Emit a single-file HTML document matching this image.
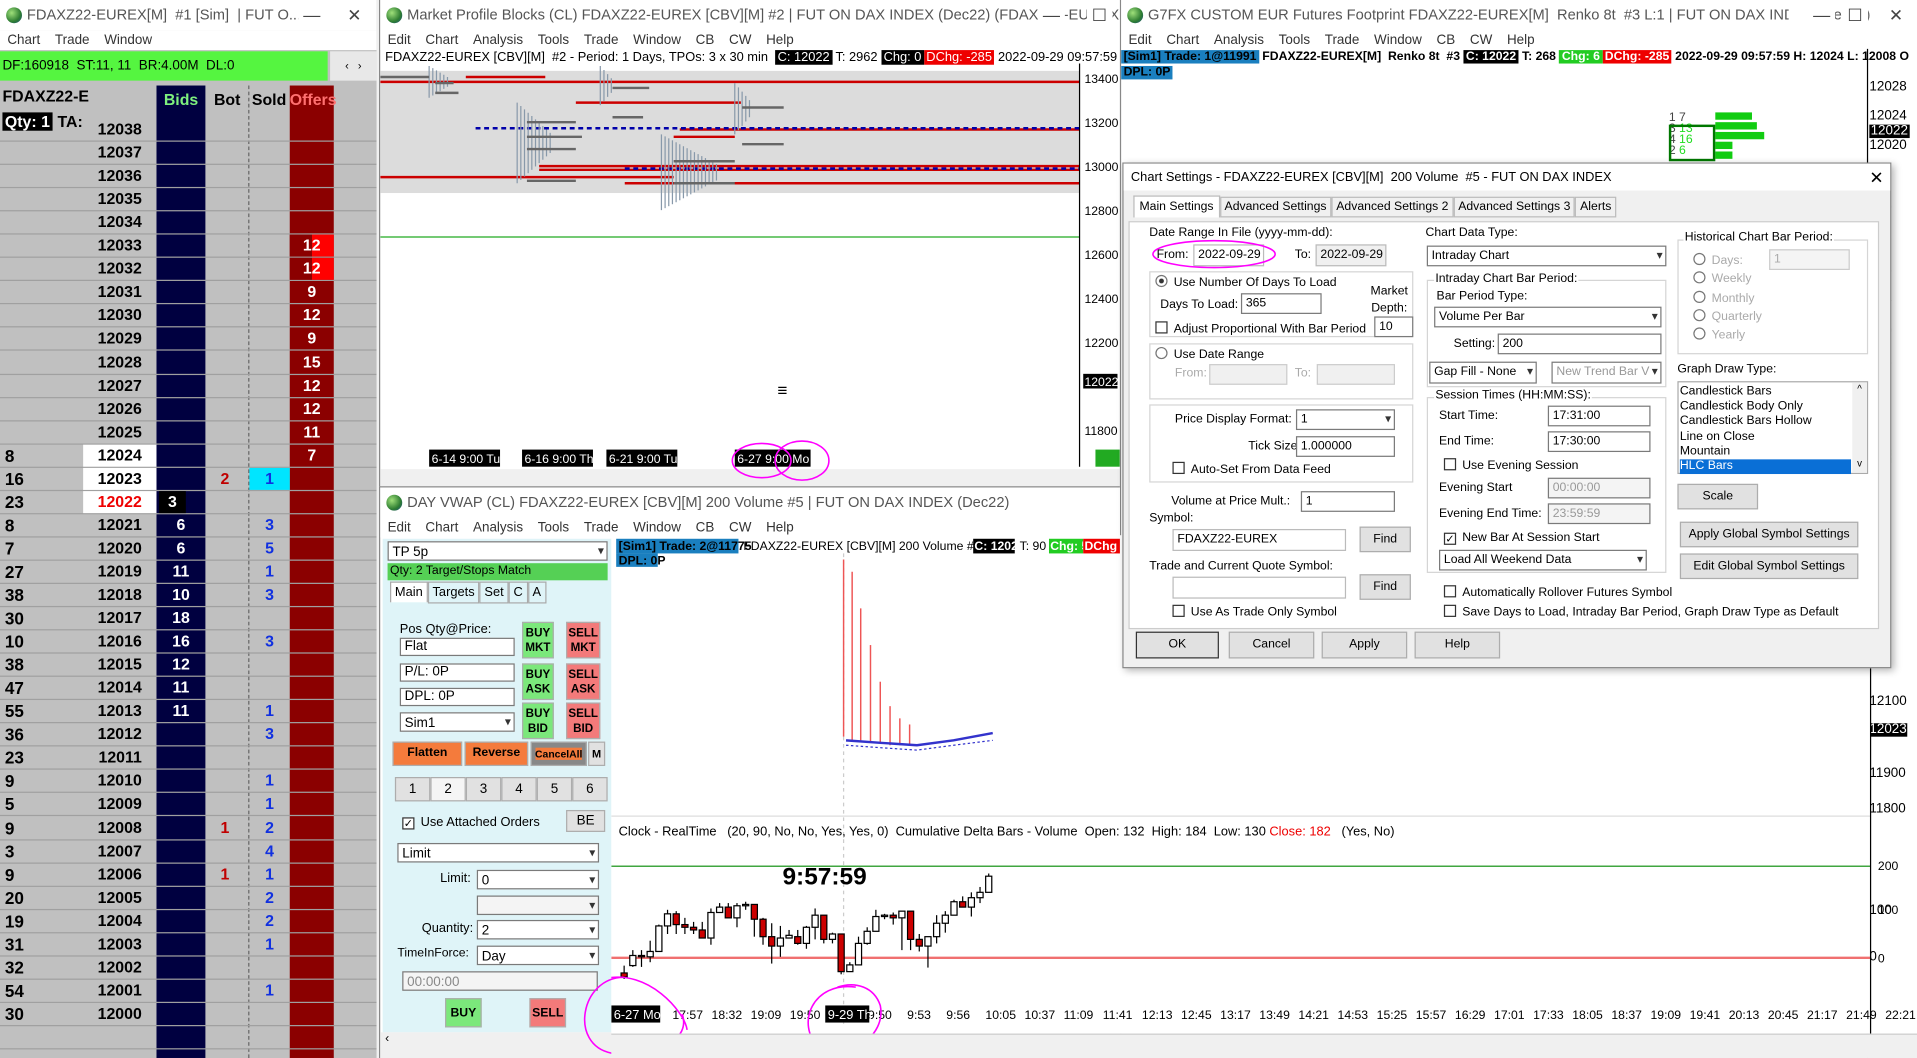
<!DOCTYPE html>
<html><head><meta charset="utf-8">
<style>
*{box-sizing:border-box;margin:0;padding:0}
html,body{width:1917px;height:1058px;overflow:hidden;background:#fff}
#root{position:absolute;left:0;top:0;width:1568px;height:866px;transform:scale(1.2226,1.2217);transform-origin:0 0;font-family:"Liberation Sans",sans-serif;font-size:11px;color:#000;background:#f0f0f0}
.a{position:absolute}
.title{position:absolute;height:25px;background:#fff;font-size:12px;color:#555;line-height:25px;padding-left:22px;white-space:nowrap;overflow:hidden}
.globe{position:absolute;left:5px;top:6px;width:13px;height:13px;border-radius:50%;background:radial-gradient(circle at 35% 35%,#9fe07a,#2e7d32 60%,#1b4b8a)}
.wb{position:absolute;top:0;font-size:14px;color:#444;background:#fff;padding:0 4px}
.menu{position:absolute;height:16px;background:#fff;font-size:11px;color:#333;line-height:16px;white-space:nowrap}
.menu span{margin:0 6px}
.dom{font-weight:bold;font-size:13px}
.btn{position:absolute;background:#e1e1e1;border:1px solid #adadad;text-align:center;font-size:11px}
.inp{position:absolute;background:#fff;border:1px solid #7a7a7a;font-size:11px;padding-left:3px;line-height:16px;white-space:nowrap;overflow:hidden}
.dd::after{content:"▾";position:absolute;right:2px;top:0;font-size:10px;color:#333}
.grp{position:absolute;border:1px solid #d5d5d5}
.lbl{position:absolute;white-space:nowrap;font-size:11px}
#dlg .lbl,#dlg .inp,#dlg .btn{font-size:10px}
#dlg .inp{line-height:15px}
.chk{display:inline-block;width:10px;height:10px;border:1px solid #333;background:#fff;vertical-align:-1px;margin-right:5px;font-size:9px;line-height:8px;text-align:center}
.rad{display:inline-block;width:10px;height:10px;border:1px solid #777;border-radius:50%;background:#fff;vertical-align:-1px;margin-right:5px}
.tag{padding:0 2px}
</style></head><body><div id="root">

<!-- ===== LEFT DOM WINDOW ===== -->
<div class="a" style="left:0;top:0;width:308px;height:866px;background:#c0c0c0;overflow:hidden">
 <div class="title" style="left:0;top:0;width:308px"><div class="globe"></div>FDAXZ22-EUREX[M] &nbsp;#1 [Sim] &nbsp;| FUT O...<span class="wb" style="left:244px">—</span><span class="wb" style="left:280px">✕</span></div>
 <div class="menu" style="left:0;top:25px;width:308px"><span>Chart</span><span>Trade</span><span>Window</span></div>
 <div class="a" style="left:0;top:42px;width:268px;height:24px;background:#55f540;font-size:11px;line-height:24px;padding-left:2px">DF:160918 &nbsp;ST:11, 11 &nbsp;BR:4.00M &nbsp;DL:0</div>
 <div class="a" style="left:270px;top:42px;width:38px;height:24px;background:#e8e8e8;font-size:9px;line-height:24px;text-align:center">‹ &nbsp; ›</div>
 <div id="dom"></div>
</div>

<!-- ===== MIDDLE TOP WINDOW ===== -->
<div class="a" style="left:310px;top:0;width:606px;height:398px;background:#fff;border-left:1px solid #888;overflow:hidden">
 <div class="title" style="left:0;top:0;width:606px"><div class="globe"></div>Market Profile Blocks (CL) FDAXZ22-EUREX [CBV][M] #2 | FUT ON DAX INDEX (Dec22) (FDAXZ22-EUREX [C...<span class="wb" style="left:538px">—</span><span class="wb" style="left:578px">☐</span></div>
 <div class="menu" style="left:0;top:25px;width:606px"><span>Edit</span><span>Chart</span><span>Analysis</span><span>Tools</span><span>Trade</span><span>Window</span><span>CB</span><span>CW</span><span>Help</span></div>
 <div class="a" style="left:4px;top:41px;font-size:10.5px;white-space:nowrap">FDAXZ22-EUREX [CBV][M] &nbsp;#2 - Period: 1 Days, TPOs: 3 x 30 min &nbsp;<span style="background:#000;color:#fff" class="tag">C: 12022</span> T: 2962 <span style="background:#000;color:#fff" class="tag">Chg: 0</span><span style="background:#e00;color:#fff" class="tag">DChg: -285</span> 2022-09-29 09:57:59 H: 12024 L:</div>
 <svg class="a" style="left:0;top:52px" width="606" height="346">
  <rect x="0" y="6" width="572" height="100" fill="#dcdcdc"/>
  <g stroke="#c00" stroke-width="2">
   <line x1="0" y1="15" x2="572" y2="15"/><line x1="70" y1="11" x2="135" y2="11"/>
   <line x1="160" y1="32" x2="295" y2="32"/><line x1="245" y1="54" x2="572" y2="54"/>
   <line x1="130" y1="84" x2="572" y2="84"/><line x1="130" y1="87" x2="572" y2="87"/>
   <line x1="0" y1="93" x2="240" y2="93"/><line x1="200" y1="98" x2="572" y2="98"/>
   <line x1="240" y1="60" x2="290" y2="60"/>
  </g>
  <g stroke="#00a" stroke-width="2" stroke-dasharray="4,3"><line x1="78" y1="53" x2="572" y2="53"/><line x1="200" y1="86" x2="572" y2="86"/></g>
  <g stroke="#8899aa" stroke-width="1" id="mp"></g>
  <g stroke="#666" stroke-width="2">
   <line x1="0" y1="11" x2="40" y2="11"/><line x1="45" y1="16" x2="60" y2="16"/><line x1="45" y1="24" x2="64" y2="24"/>
   <line x1="120" y1="48" x2="160" y2="48"/><line x1="120" y1="60" x2="165" y2="60"/><line x1="120" y1="70" x2="160" y2="70"/><line x1="120" y1="96" x2="160" y2="96"/>
   <line x1="190" y1="20" x2="220" y2="20"/><line x1="190" y1="44" x2="215" y2="44"/>
   <line x1="240" y1="80" x2="290" y2="80"/><line x1="240" y1="98" x2="290" y2="98"/>
   <line x1="296" y1="36" x2="330" y2="36"/><line x1="296" y1="66" x2="330" y2="66"/>
  </g>
  <line x1="0" y1="142" x2="572" y2="142" stroke="#2a2" stroke-width="1"/>
  <g font-size="10" fill="#000"><text x="576" y="16">13400</text><text x="576" y="52">13200</text><text x="576" y="88">13000</text><text x="576" y="124">12800</text><text x="576" y="160">12600</text><text x="576" y="196">12400</text><text x="576" y="232">12200</text><text x="576" y="304">11800</text></g>
  <rect x="575" y="254" width="28" height="12" fill="#000"/><text x="576" y="264" font-size="10" fill="#fff">12022</text>
  <text x="325" y="272" font-size="14">≡</text>
  <line x1="572" y1="0" x2="572" y2="330" stroke="#000"/>
  <g font-size="10"><rect x="40" y="316" width="58" height="14" fill="#000"/><text x="42" y="327" fill="#fff">6-14 9:00 Tu</text>
  <rect x="116" y="316" width="58" height="14" fill="#000"/><text x="118" y="327" fill="#fff">6-16 9:00 Th</text>
  <rect x="185" y="316" width="58" height="14" fill="#000"/><text x="187" y="327" fill="#fff">6-21 9:00 Tu</text>
  <rect x="290" y="316" width="62" height="14" fill="#000"/><text x="292" y="327" fill="#fff">6-27 9:00 Mo</text>
  <rect x="585" y="316" width="20" height="14" fill="#2a2"/></g>
  <rect x="0" y="332" width="606" height="14" fill="#f0f0f0"/>
  <g fill="none" stroke="#f0f" stroke-width="1.3"><ellipse cx="312" cy="325" rx="24" ry="14"/><ellipse cx="345" cy="325" rx="22" ry="16"/></g>
 </svg>
</div>

<!-- ===== RIGHT WINDOW ===== -->
<div class="a" style="left:916px;top:0;width:652px;height:866px;background:#fff;border-left:1px solid #888;overflow:hidden">
 <div class="title" style="left:0;top:0;width:652px"><div class="globe"></div>G7FX CUSTOM EUR Futures Footprint FDAXZ22-EUREX[M] &nbsp;Renko 8t &nbsp;#3 L:1 | FUT ON DAX INDEX (Dec22)<span class="wb" style="left:546px;padding-left:20px">—</span><span class="wb" style="left:590px">☐</span><span class="wb" style="left:624px">✕</span></div>
 <div class="menu" style="left:0;top:25px;width:652px"><span>Edit</span><span>Chart</span><span>Analysis</span><span>Tools</span><span>Trade</span><span>Window</span><span>CB</span><span>CW</span><span>Help</span></div>
 <div class="a" style="left:0;top:41px;font-size:10px;white-space:nowrap;font-weight:bold"><span style="background:#1a7fbf" class="tag">[Sim1] Trade: 1@11991</span> FDAXZ22-EUREX[M] &nbsp;Renko 8t &nbsp;#3 <span style="background:#000;color:#fff" class="tag">C: 12022</span> T: 268 <span style="background:#2c2;color:#fff" class="tag">Chg: 6</span><span style="background:#e00;color:#fff" class="tag">DChg: -285</span> 2022-09-29 09:57:59 H: 12024 L: 12008 O</div>
 <div class="a" style="left:0;top:54px;background:#1a7fbf;font-size:10px;font-weight:bold;padding:0 2px">DPL: 0P</div>
 <div class="a" style="left:610px;top:40px;width:1px;height:826px;background:#000"></div>
 <div class="a" style="left:612px;top:0;font-size:11px;line-height:1">
  <div class="a" style="top:66px">12028</div><div class="a" style="top:90px">12024</div><div class="a" style="top:102px;background:#000;color:#fff;padding:0 1px">12022</div><div class="a" style="top:114px">12020</div>
  <div class="a" style="top:164px">016</div><div class="a" style="top:188px">012</div><div class="a" style="top:216px">008</div><div class="a" style="top:240px">004</div><div class="a" style="top:266px">000</div><div class="a" style="top:292px">996</div>
  <div class="a" style="top:368px;background:#2a2;color:#fff;font-weight:bold">108</div>
  <div class="a" style="top:569px">12100</div><div class="a" style="top:592px;background:#000;color:#fff">12023</div><div class="a" style="top:628px">11900</div><div class="a" style="top:657px">11800</div>
  <div class="a" style="top:740px">100</div><div class="a" style="top:778px">0</div>
 </div>
 <div class="a" style="left:448px;top:92px;width:80px;height:40px;font-size:10px;color:#444;line-height:9px">
  <div class="a" style="left:38px;top:0;width:30px;height:6px;background:#1c1"></div>
  <div class="a" style="left:38px;top:8px;width:34px;height:6px;background:#1c1"></div>
  <div class="a" style="left:38px;top:16px;width:40px;height:6px;background:#1c1"></div>
  <div class="a" style="left:38px;top:24px;width:14px;height:6px;background:#1c1"></div>
  <div class="a" style="left:38px;top:32px;width:14px;height:6px;background:#1c1"></div>
  <div class="a" style="left:0;top:10px;width:38px;height:30px;border:2px solid #070"></div>1 7<br>3 <span style="color:#2d2">13</span><br>4 <span style="color:#2d2">16</span><br>2 <span style="color:#2d2">6</span></div>
</div>

<!-- ===== MIDDLE BOTTOM WINDOW ===== -->
<div class="a" style="left:310px;top:398px;width:606px;height:468px;background:#fff;border-left:1px solid #888;border-top:1px solid #888;overflow:hidden">
 <div class="title" style="left:0;top:0;width:606px"><div class="globe"></div>DAY VWAP (CL) FDAXZ22-EUREX [CBV][M] 200 Volume #5 | FUT ON DAX INDEX (Dec22)</div>
 <div class="menu" style="left:0;top:25px;width:606px"><span>Edit</span><span>Chart</span><span>Analysis</span><span>Tools</span><span>Trade</span><span>Window</span><span>CB</span><span>CW</span><span>Help</span></div>
 <div class="a" style="left:2px;top:42px;width:187px;height:404px;background:#dff4f8">
  <div class="inp dd" style="left:4px;top:2px;width:180px;height:16px">TP 5p</div>
  <div class="a" style="left:4px;top:20px;width:180px;height:14px;background:#55d055;font-size:10px;line-height:14px;padding-left:2px">Qty: 2 Target/Stops Match</div>
  <div class="a" style="left:6px;top:38px;font-size:10.5px;white-space:nowrap"><span style="border:1px solid #aaa;border-bottom:none;padding:2px 3px;background:#fff">Main</span><span style="border:1px solid #aaa;padding:2px 3px">Targets</span><span style="border:1px solid #aaa;padding:2px 3px">Set</span><span style="border:1px solid #aaa;padding:2px 3px">C</span><span style="border:1px solid #aaa;padding:2px 3px">A</span></div>
  <div class="lbl" style="left:14px;top:68px;font-size:10.5px">Pos Qty@Price:</div>
  <div class="inp" style="left:14px;top:81px;width:94px;height:15px;line-height:13px">Flat</div>
  <div class="inp" style="left:14px;top:102px;width:94px;height:15px;line-height:13px">P/L: 0P</div>
  <div class="inp" style="left:14px;top:122px;width:94px;height:15px;line-height:13px">DPL: 0P</div>
  <div class="inp dd" style="left:14px;top:142px;width:94px;height:16px">Sim1</div>
  <div class="btn" style="left:114px;top:68px;width:26px;height:30px;background:#7be87b;font-weight:bold;font-size:9.5px;line-height:12px;padding-top:3px">BUY<br>MKT</div>
  <div class="btn" style="left:114px;top:102px;width:26px;height:30px;background:#7be87b;font-weight:bold;font-size:9.5px;line-height:12px;padding-top:3px">BUY<br>ASK</div>
  <div class="btn" style="left:114px;top:134px;width:26px;height:30px;background:#7be87b;font-weight:bold;font-size:9.5px;line-height:12px;padding-top:3px">BUY<br>BID</div>
  <div class="btn" style="left:150px;top:68px;width:28px;height:30px;background:#f37a7a;font-weight:bold;font-size:9.5px;line-height:12px;padding-top:3px">SELL<br>MKT</div>
  <div class="btn" style="left:150px;top:102px;width:28px;height:30px;background:#f37a7a;font-weight:bold;font-size:9.5px;line-height:12px;padding-top:3px">SELL<br>ASK</div>
  <div class="btn" style="left:150px;top:134px;width:28px;height:30px;background:#f37a7a;font-weight:bold;font-size:9.5px;line-height:12px;padding-top:3px">SELL<br>BID</div>
  <div class="btn" style="left:8px;top:166px;width:57px;height:20px;background:#f47b3c;font-weight:bold;line-height:18px;font-size:10px">Flatten</div>
  <div class="btn" style="left:67px;top:166px;width:52px;height:20px;background:#f47b3c;font-weight:bold;line-height:18px;font-size:10px">Reverse</div>
  <div class="btn" style="left:121px;top:166px;width:46px;height:20px;background:#888;font-weight:bold;line-height:18px;font-size:8.5px;overflow:hidden"><span style="background:#f47b3c">CancelAll</span></div>
  <div class="btn" style="left:168px;top:166px;width:14px;height:20px;font-weight:bold;line-height:18px;font-size:9px">M</div>
  <div class="a" style="left:10px;top:195px;width:174px;height:20px;display:flex;font-size:11px">
   <div class="btn" style="position:static;flex:1;line-height:18px">1</div><div class="btn" style="position:static;flex:1;line-height:18px;background:#f5f5f5">2</div><div class="btn" style="position:static;flex:1;line-height:18px">3</div><div class="btn" style="position:static;flex:1;line-height:18px">4</div><div class="btn" style="position:static;flex:1;line-height:18px">5</div><div class="btn" style="position:static;flex:1;line-height:18px">6</div></div>
  <div class="lbl" style="left:16px;top:226px;font-size:10.5px"><span class="chk">✓</span>Use Attached Orders</div>
  <div class="btn" style="left:150px;top:222px;width:32px;height:18px;line-height:16px">BE</div>
  <div class="inp dd" style="left:12px;top:249px;width:165px;height:16px">Limit</div>
  <div class="lbl" style="left:47px;top:272px;font-size:10.5px">Limit:</div><div class="inp dd" style="left:77px;top:271px;width:100px;height:16px">0</div>
  <div class="inp dd" style="left:77px;top:292px;width:100px;height:16px;background:#f4f4f4"></div>
  <div class="lbl" style="left:32px;top:313px;font-size:10.5px">Quantity:</div><div class="inp dd" style="left:77px;top:312px;width:100px;height:16px">2</div>
  <div class="lbl" style="left:12px;top:334px;font-size:10px">TimeInForce:</div><div class="inp dd" style="left:77px;top:333px;width:100px;height:16px">Day</div>
  <div class="inp" style="left:16px;top:354px;width:160px;height:16px;color:#888;background:#f4f4f4">00:00:00</div>
  <div class="btn" style="left:51px;top:376px;width:30px;height:24px;background:#7be87b;font-weight:bold;line-height:24px;font-size:10px">BUY</div>
  <div class="btn" style="left:120px;top:376px;width:30px;height:24px;background:#f37a7a;font-weight:bold;line-height:24px;font-size:10px">SELL</div>
 </div>
 <div class="a" style="left:0;top:446px;width:606px;height:22px;background:#f0f0f0;font-size:10px;padding-left:4px">‹</div>
</div>

<!-- bottom chart across -->
<svg class="a" style="left:500px;top:438px" width="1068" height="408">
 <rect x="0" y="0" width="1030" height="408" fill="#fff"/>
 <g font-family="Liberation Sans" font-size="10" font-weight="bold"><rect x="4" y="3" width="100" height="12" fill="#1a7fbf"/><text x="6" y="12">[Sim1] Trade: 2@11775</text><text x="108" y="12" font-weight="normal">FDAXZ22-EUREX [CBV][M] 200 Volume #5</text>
 <rect x="296" y="3" width="34" height="12" fill="#000"/><text x="297" y="12" fill="#fff">C: 12023</text><text x="334" y="12" font-weight="normal">T: 90</text><rect x="358" y="3" width="28" height="12" fill="#2c2"/><text x="359" y="12" fill="#fff">Chg: 5</text><rect x="386" y="3" width="30" height="12" fill="#e00"/><text x="387" y="12" fill="#fff">DChg</text>
 <rect x="4" y="15" width="34" height="11" fill="#1a7fbf"/><text x="6" y="24">DPL: 0P</text></g>
 <line x1="190" y1="15" x2="190" y2="400" stroke="#ccc" stroke-dasharray="3,3"/>
 <g stroke="#e55" stroke-width="1.2"><line x1="190" y1="20" x2="190" y2="165"/><line x1="197" y1="30" x2="197" y2="168"/><line x1="204" y1="60" x2="204" y2="168"/><line x1="212" y1="90" x2="212" y2="170"/><line x1="220" y1="120" x2="220" y2="170"/><line x1="228" y1="140" x2="228" y2="172"/><line x1="236" y1="150" x2="236" y2="172"/><line x1="244" y1="155" x2="244" y2="172"/></g>
 <polyline points="192,168 220,170 250,172 280,168 312,162" fill="none" stroke="#33c" stroke-width="2"/>
 <polyline points="192,172 220,174 250,176 280,172 312,168" fill="none" stroke="#33c" stroke-width="1" stroke-dasharray="2,2"/>
 <line x1="0" y1="230" x2="1030" y2="230" stroke="#ddd"/>
 <text x="6" y="246" font-size="10.5">Clock - RealTime &nbsp; (20, 90, No, No, Yes, Yes, 0) &nbsp;Cumulative Delta Bars - Volume &nbsp;Open: 132 &nbsp;High: 184 &nbsp;Low: 130 <tspan fill="#e00">Close: 182</tspan> &nbsp; (Yes, No)</text>
 <line x1="0" y1="271" x2="1030" y2="271" stroke="#080"/>
 <line x1="0" y1="346" x2="1030" y2="346" stroke="#f07070" stroke-width="2"/>
 <text x="140" y="286" font-size="20" font-weight="bold">9:57:59</text>
 <g id="candles" stroke="#000" stroke-width="1"></g>
 <line x1="1030" y1="0" x2="1030" y2="408" stroke="#000"/>
 <g font-size="10"><text x="1036" y="274">200</text></g>
 <g font-size="10" id="xl"></g>
 <rect x="0" y="385" width="40" height="14" fill="#000"/><text x="2" y="396" font-size="10.5" fill="#fff">6-27 Mo</text>
 <rect x="175" y="385" width="36" height="14" fill="#000"/><text x="177" y="396" font-size="10.5" fill="#fff">9-29 Th</text>
 <g fill="none" stroke="#f0f" stroke-width="1.3"><path d="M-5,363 C30,355 60,390 62,405"/><path d="M200,370 C165,365 150,400 170,420 C195,430 225,410 220,385 C215,370 200,365 185,370"/></g>
</svg>
<svg class="a" style="left:470px;top:790px" width="100" height="76"><path d="M40,10 C5,10 -5,65 30,72 C70,76 95,60 88,40" fill="none" stroke="#f0f" stroke-width="1.3"/></svg>
<div class="a" style="left:500px;top:846px;width:1068px;height:20px;background:#f0f0f0;border-top:1px solid #ccc"></div>

<!-- ===== DIALOG ===== -->
<div id="dlg" class="a" style="left:918px;top:133px;width:629px;height:414px;background:#f0f0f0;border:1px solid #888;box-shadow:2px 2px 6px rgba(0,0,0,.3)">
 <div class="a" style="left:0;top:0;width:627px;height:22px;background:#fff;font-size:10.5px;line-height:22px;padding-left:6px">Chart Settings - FDAXZ22-EUREX [CBV][M] &nbsp;200 Volume &nbsp;#5 - FUT ON DAX INDEX<span class="a" style="left:610px;top:0;font-size:14px">✕</span></div>
 <div class="a" style="left:8px;top:30px;font-size:10px;white-space:nowrap"><span style="border:1px solid #bbb;border-bottom:none;padding:3px 4px;background:#fff">Main Settings</span><span style="border:1px solid #bbb;padding:2px 3px">Advanced Settings</span><span style="border:1px solid #bbb;padding:2px 3px">Advanced Settings 2</span><span style="border:1px solid #bbb;padding:2px 3px">Advanced Settings 3</span><span style="border:1px solid #bbb;padding:2px 3px">Alerts</span></div>
 <div class="a" style="left:4px;top:47px;width:614px;height:334px;background:#fff;border:1px solid #ccc"></div>
 <div class="lbl" style="left:21px;top:51px">Date Range In File (yyyy-mm-dd):</div>
 <div class="lbl" style="left:27px;top:69px">From:</div><div class="inp" style="left:57px;top:66px;width:58px;height:18px;border-color:#bbb">2022-09-29</div>
 <div class="lbl" style="left:140px;top:69px">To:</div><div class="inp" style="left:157px;top:66px;width:58px;height:18px;background:#f0f0f0;border-color:#bbb">2022-09-29</div>
 <svg class="a" style="left:22px;top:60px" width="110" height="30"><ellipse cx="52" cy="14" rx="50" ry="11" fill="none" stroke="#f0f" stroke-width="1.3"/></svg>
 <div class="grp" style="left:21px;top:88px;width:216px;height:54px"></div>
 <div class="lbl" style="left:26px;top:91px"><span class="rad" style="background:radial-gradient(#333 30%,#fff 40%)"></span>Use Number Of Days To Load</div>
 <div class="lbl" style="left:30px;top:110px">Days To Load:</div><div class="inp" style="left:96px;top:106px;width:66px;height:17px">365</div>
 <div class="lbl" style="left:202px;top:98px;line-height:14px;text-align:center">Market<br>Depth:</div>
 <div class="lbl" style="left:26px;top:129px"><span class="chk"></span>Adjust Proportional With Bar Period</div>
 <div class="inp" style="left:205px;top:125px;width:32px;height:17px">10</div>
 <div class="grp" style="left:21px;top:147px;width:216px;height:46px"></div>
 <div class="lbl" style="left:26px;top:150px"><span class="rad"></span>Use Date Range</div>
 <div class="lbl" style="left:42px;top:166px;color:#aaa">From:</div><div class="inp" style="left:70px;top:164px;width:64px;height:17px;background:#f0f0f0;border-color:#ccc"></div>
 <div class="lbl" style="left:140px;top:166px;color:#aaa">To:</div><div class="inp" style="left:158px;top:164px;width:64px;height:17px;background:#f0f0f0;border-color:#ccc"></div>
 <div class="grp" style="left:21px;top:197px;width:216px;height:64px"></div>
 <div class="lbl" style="left:42px;top:204px">Price Display Format:</div><div class="inp dd" style="left:141px;top:201px;width:81px;height:17px">1</div>
 <div class="lbl" style="left:102px;top:226px">Tick Size:</div><div class="inp" style="left:141px;top:223px;width:81px;height:17px">1.000000</div>
 <div class="lbl" style="left:40px;top:244px"><span class="chk"></span>Auto-Set From Data Feed</div>
 <div class="lbl" style="left:39px;top:271px">Volume at Price Mult.:</div><div class="inp" style="left:145px;top:268px;width:77px;height:17px">1</div>
 <div class="lbl" style="left:21px;top:285px">Symbol:</div>
 <div class="inp" style="left:40px;top:299px;width:142px;height:18px;border-color:#bbb">FDAXZ22-EUREX</div>
 <div class="btn" style="left:193px;top:297px;width:42px;height:21px;line-height:19px">Find</div>
 <div class="lbl" style="left:21px;top:324px">Trade and Current Quote Symbol:</div>
 <div class="inp" style="left:40px;top:338px;width:142px;height:18px;border-color:#bbb"></div>
 <div class="btn" style="left:193px;top:336px;width:42px;height:21px;line-height:19px">Find</div>
 <div class="lbl" style="left:40px;top:361px"><span class="chk"></span>Use As Trade Only Symbol</div>

 <div class="lbl" style="left:247px;top:51px">Chart Data Type:</div>
 <div class="inp dd" style="left:248px;top:67px;width:196px;height:17px">Intraday Chart</div>
 <div class="grp" style="left:248px;top:95px;width:196px;height:88px"></div>
 <div class="lbl" style="left:254px;top:89px;background:#fff;padding:0 1px">Intraday Chart Bar Period:</div>
 <div class="lbl" style="left:256px;top:103px">Bar Period Type:</div>
 <div class="inp dd" style="left:254px;top:117px;width:186px;height:17px">Volume Per Bar</div>
 <div class="lbl" style="left:270px;top:142px">Setting:</div><div class="inp" style="left:306px;top:139px;width:134px;height:17px">200</div>
 <div class="inp dd" style="left:250px;top:162px;width:88px;height:18px">Gap Fill - None</div>
 <div class="inp dd" style="left:350px;top:162px;width:90px;height:18px;color:#999">New Trend Bar V</div>
 <div class="grp" style="left:248px;top:191px;width:196px;height:144px"></div>
 <div class="lbl" style="left:254px;top:184px;background:#fff;padding:0 1px">Session Times (HH:MM:SS):</div>
 <div class="lbl" style="left:258px;top:201px">Start Time:</div><div class="inp" style="left:347px;top:198px;width:84px;height:17px">17:31:00</div>
 <div class="lbl" style="left:258px;top:222px">End Time:</div><div class="inp" style="left:347px;top:219px;width:84px;height:17px">17:30:00</div>
 <div class="lbl" style="left:262px;top:241px"><span class="chk"></span>Use Evening Session</div>
 <div class="lbl" style="left:258px;top:260px">Evening Start</div><div class="inp" style="left:347px;top:257px;width:84px;height:17px;color:#999;background:#f4f4f4">00:00:00</div>
 <div class="lbl" style="left:258px;top:281px">Evening End Time:</div><div class="inp" style="left:347px;top:278px;width:84px;height:17px;color:#999;background:#f4f4f4">23:59:59</div>
 <div class="lbl" style="left:262px;top:301px"><span class="chk">✓</span>New Bar At Session Start</div>
 <div class="inp dd" style="left:258px;top:316px;width:170px;height:17px">Load All Weekend Data</div>
 <div class="lbl" style="left:262px;top:345px"><span class="chk"></span>Automatically Rollover Futures Symbol</div>
 <div class="lbl" style="left:262px;top:361px"><span class="chk"></span>Save Days to Load, Intraday Bar Period, Graph Draw Type as Default</div>

 <div class="grp" style="left:453px;top:62px;width:156px;height:94px"></div>
 <div class="lbl" style="left:458px;top:55px;background:#fff;padding:0 1px">Historical Chart Bar Period:</div>
 <div class="lbl" style="left:466px;top:72px;color:#aaa;line-height:15.3px"><span class="rad"></span>Days:<br><span class="rad"></span>Weekly<br><span class="rad"></span>Monthly<br><span class="rad"></span>Quarterly<br><span class="rad"></span>Yearly</div>
 <div class="inp" style="left:528px;top:70px;width:66px;height:17px;color:#aaa;background:#f4f4f4;border-color:#ccc">1</div>
 <div class="lbl" style="left:453px;top:163px">Graph Draw Type:</div>
 <div class="a" style="left:453px;top:178px;width:156px;height:76px;border:1px solid #aaa;background:#fff;font-size:10px;line-height:12.2px;padding:2px 0 0 1px">
  Candlestick Bars<br>Candlestick Body Only<br>Candlestick Bars Hollow<br>Line on Close<br>Mountain<br><span style="display:block;width:140px;background:#0a6fd6;color:#fff">HLC Bars</span>
  <div class="a" style="right:0;top:0;width:12px;height:74px;background:#f0f0f0;font-size:8px;text-align:center">^<br><br><br><br><br>v</div></div>
 <div class="btn" style="left:453px;top:262px;width:66px;height:21px;line-height:19px">Scale</div>
 <div class="btn" style="left:455px;top:293px;width:146px;height:21px;line-height:19px">Apply Global Symbol Settings</div>
 <div class="btn" style="left:455px;top:319px;width:146px;height:21px;line-height:19px">Edit Global Symbol Settings</div>

 <div class="btn" style="left:10px;top:383px;width:68px;height:22px;line-height:20px;border-color:#333">OK</div>
 <div class="btn" style="left:86px;top:383px;width:70px;height:22px;line-height:20px">Cancel</div>
 <div class="btn" style="left:162px;top:383px;width:70px;height:22px;line-height:20px">Apply</div>
 <div class="btn" style="left:238px;top:383px;width:70px;height:22px;line-height:20px">Help</div>
</div>

</div>
<script>
(function(){
 var d=document.getElementById('dom'),h='';
 h+='<div class="a dom" style="left:2px;top:71px;font-size:13px">FDAXZ22-E</div>';
 h+='<div class="a dom" style="left:2px;top:92px;background:#000;color:#fff;padding:0 2px">Qty: 1</div><div class="a dom" style="left:47px;top:92px">TA:</div>';
 h+='<div class="a" style="left:128px;top:70px;width:40px;height:796px;background:#000040"></div>';
 h+='<div class="a" style="left:237px;top:70px;width:36px;height:796px;background:#8b0000"></div>';
 h+='<div class="a dom" style="left:134px;top:74px;color:#7ef07e">Bids</div><div class="a dom" style="left:175px;top:74px">Bot</div><div class="a dom" style="left:206px;top:74px">Sold</div><div class="a dom" style="left:237px;top:74px;color:#ff7070">Offers</div>';
 h+='<div class="a" style="left:203px;top:70px;height:796px;border-left:1px dashed #666"></div>';
 var off={12033:12,12032:12,12031:9,12030:12,12029:9,12028:15,12027:12,12026:12,12025:11,12024:7};
 var vol={12024:8,12023:16,12022:23,12021:8,12020:7,12019:27,12018:38,12017:30,12016:10,12015:38,12014:47,12013:55,12012:36,12011:23,12010:9,12009:5,12008:9,12007:3,12006:9,12005:20,12004:19,12003:31,12002:32,12001:54,12000:30};
 var bid={12022:3,12021:6,12020:6,12019:11,12018:10,12017:18,12016:16,12015:12,12014:11,12013:11};
 var bot={12023:2,12008:1,12006:1};
 var sold={12023:1,12021:3,12020:5,12019:1,12018:3,12016:3,12013:1,12012:3,12010:1,12009:1,12008:2,12007:4,12006:1,12005:2,12004:2,12003:1,12001:1};
 for(var p=12038,i=0;p>=11999;p--,i++){
  var y=97+i*19.05;
  h+='<div class="a" style="left:0;top:'+(y+18)+'px;width:308px;height:1px;background:#a0a0a0"></div>';
  var bg=(p>=12022&&p<=12024)?'#fff':'transparent';
  h+='<div class="a dom" style="left:68px;top:'+y+'px;width:60px;height:18px;background:'+bg+';text-align:right;padding-right:12px;line-height:18px;color:'+(p==12022?'#e00':'#000')+'">'+(p>11999?p:'')+'</div>';
  if(vol[p])h+='<div class="a dom" style="left:4px;top:'+y+'px;line-height:18px;font-size:14px">'+vol[p]+'</div>';
  if(bid[p])h+='<div class="a dom" style="left:'+(p==12022?130:128)+'px;top:'+y+'px;width:'+(p==12022?22:40)+'px;line-height:18px;text-align:center;color:#fff;background:'+(p==12022?'#000':'transparent')+'">'+bid[p]+'</div>';
  if(bot[p])h+='<div class="a dom" style="left:168px;top:'+y+'px;width:32px;text-align:center;line-height:18px;color:#c00000">'+bot[p]+'</div>';
  if(sold[p])h+='<div class="a dom" style="left:204px;top:'+y+'px;width:33px;text-align:center;line-height:18px;color:#1030e0;background:'+(p==12023?'#00e5ff':'transparent')+'">'+sold[p]+'</div>';
  if(off[p])h+='<div class="a dom" style="left:237px;top:'+y+'px;width:36px;text-align:center;line-height:18px;color:#fff;background:'+((p==12033||p==12032)?'linear-gradient(90deg,#8b0000 50%,#f00 50%)':'transparent')+'">'+off[p]+'</div>';
 }
 d.innerHTML=h;
 // market profile histograms
 var mp='',blocks=[[40,0,30,8],[115,33,97,10],[182,0,36,4],[232,60,118,14],[292,18,56,4],[440,95,120,0]];
 [[40,2,28,6],[112,32,98,10],[180,2,34,4],[230,58,120,16],[290,16,58,5]].forEach(function(b){for(var k=0;k<b[3];k++){var x=b[0]+k*3,sh=k*(b[2]-b[1])/(b[3]*2.4);mp+='<line x1="'+x+'" y1="'+(b[1]+sh)+'" x2="'+x+'" y2="'+(b[2]-sh)+'"/>';}});
 document.getElementById('mp').innerHTML=mp;
 var c=[[354,360,343,363],[343,328,320,345],[328,330,320,345],[330,322,306,338],[322,284,282,322],[284,266,260,296],[266,282,262,296],[282,286,272,296],[286,290,278,296],[290,302,278,302],[302,264,258,312],[264,256,250,264],[256,272,250,272],[272,254,250,286],[254,252,248,260],[252,274,252,300],[274,300,272,312],[300,314,280,340],[314,302,284,330],[302,298,290,300],[300,310,290,312],[310,286,284,318],[286,268,258,304],[268,304,268,310],[304,296,294,310],[296,352,296,356],[352,342,338,352],[342,310,300,342],[310,292,286,312],[292,270,260,292],[270,268,266,274],[268,272,264,282],[272,262,262,320],[262,304,262,320],[304,314,296,322],[314,300,300,346],[300,280,268,310],[280,268,262,294],[268,248,245,268],[248,256,240,256],[256,242,234,270],[242,234,226,250],[234,210,206,234]];
 function m(v){return 277+(v-206)*0.55;}
 var g='',x;
 c.forEach(function(k,i){var o=m(k[0]),cl=m(k[1]),up=cl<o,t=Math.min(o,cl),b=Math.max(o,cl);x=8+i*7.1;
  g+='<line x1="'+(x+2.5)+'" y1="'+m(k[2])+'" x2="'+(x+2.5)+'" y2="'+m(k[3])+'"/><rect x="'+x+'" y="'+t+'" width="5" height="'+Math.max(1,b-t)+'" fill="'+(up?'#fff':'#c00')+'"/>';});
 document.getElementById('candles').innerHTML=g;
 var xs=['17:57','18:32','19:09','19:50','','9:50','9:53','9:56','10:05','10:37','11:09','11:41','12:13','12:45','13:17','13:49','14:21','14:53','15:25','15:57','16:29','17:01','17:33','18:05','18:37','19:09','19:41','20:13','20:45','21:17','21:49','22:21'];
 var xl='';xs.forEach(function(s,i){if(s)xl+='<text x="'+(50+i*32)+'" y="396">'+s+'</text>';});
 xl+='<text x="1036" y="310">100</text><text x="1036" y="350">0</text>';
 document.getElementById('xl').innerHTML=xl;
})();
</script>
</body></html>
